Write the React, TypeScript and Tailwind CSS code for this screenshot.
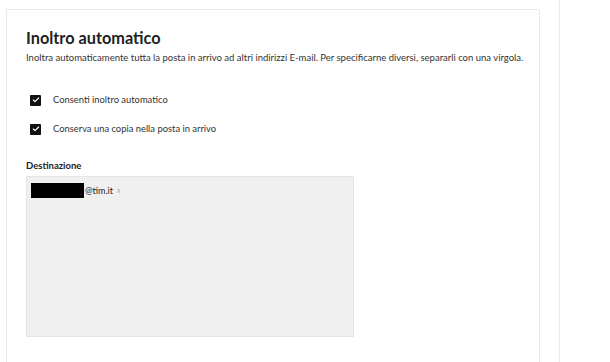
import { Check } from 'lucide-react';

function Checkbox({ label }: { label: string }) {
  return (
    <label className="flex h-[12px] items-center gap-[12px]">
      <span className="flex h-[11px] w-[11px] items-center justify-center rounded-[1px] bg-[#111]">
        <Check className="h-[8px] w-[8px] text-white" strokeWidth={3.5} />
      </span>
      <span className="text-[9.4px] text-[#333]">{label}</span>
    </label>
  );
}

export default function App() {
  return (
    <div
      className="flex h-[362px] w-[610px] overflow-hidden bg-white"
      style={{ fontFamily: 'Lato, "Open Sans", sans-serif' }}
    >
      {/* Settings card */}
      <div className="ml-[6px] mt-[9px] h-[400px] w-[534px] shrink-0 rounded-[2px] border border-[#e8e8e8] px-[19px] pt-[18px]">
        <h1 className="text-[16.3px] font-bold leading-[20px] text-[#222]">Inoltro automatico</h1>
        <p className="mt-[4px] whitespace-nowrap text-[9.5px] leading-[12px] text-[#333]">
          Inoltra automaticamente tutta la posta in arrivo ad altri indirizzi E-mail. Per specificarne diversi, separarli con una virgola.
        </p>

        <div className="ml-[4px] mt-[30px] flex flex-col gap-[17px]">
          <Checkbox label="Consenti inoltro automatico" />
          <Checkbox label="Conserva una copia nella posta in arrivo" />
        </div>

        <div className="mt-[24px] text-[9.5px] font-bold leading-[14px] text-[#222]">Destinazione</div>
        <div className="mt-[3px] h-[161px] w-[328px] rounded-[1px] border border-[#e4e4e4] bg-[#f0f0f0] pl-[4px] pt-[6px]">
          <div className="flex items-center text-[9px] text-[#222]">
            <span className="mr-[1px] inline-block h-[15px] w-[53px] bg-black" />
            <span>@tim.it</span>
            <span className="ml-[4px] text-[7px] text-[#aaa]">x</span>
          </div>
        </div>
      </div>

      {/* Side column divider */}
      <div className="ml-[19px] h-full w-px bg-[#ececec]" />
    </div>
  );
}
